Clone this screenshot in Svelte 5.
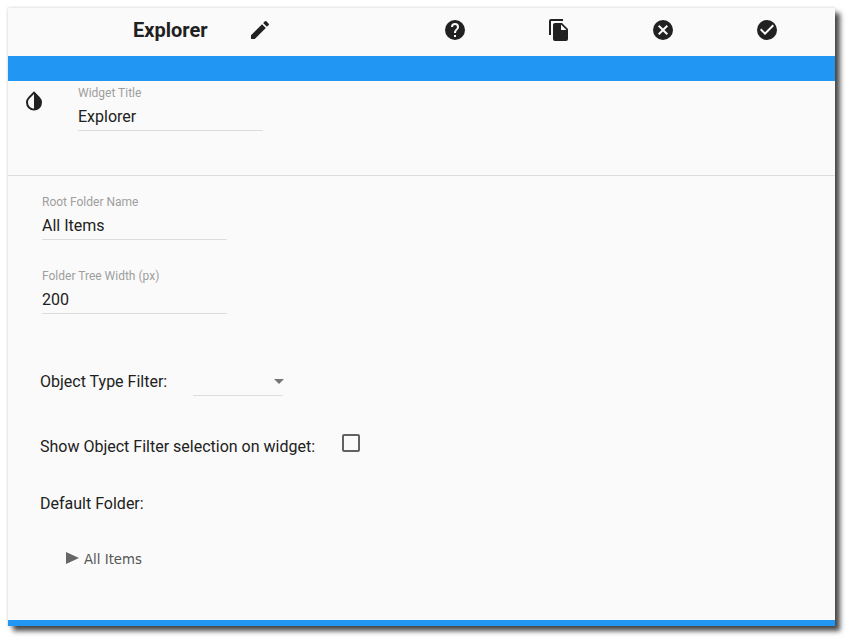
<script>
  let title = "Explorer";
  let rootName = "All Items";
  let treeWidth = "200";
  let showFilter = false;
</script>

<div class="panel">
  <header class="toolbar">
    <h1 class="title">{title}</h1>
    <button class="tool" type="button" aria-label="Edit">
      <svg viewBox="0 0 24 24"><path d="M3 17.25V21h3.75L17.81 9.94l-3.75-3.75L3 17.25zM20.71 7.04a1 1 0 0 0 0-1.41l-2.34-2.34a1 1 0 0 0-1.41 0l-1.83 1.83 3.75 3.75 1.83-1.83z" /></svg>
    </button>
    <div class="actions">
      <button class="tool" type="button" aria-label="Help">
        <svg viewBox="0 0 24 24"><path d="M12 2a10 10 0 1 0 0 20 10 10 0 0 0 0-20zm1 17h-2v-2h2v2zm2.07-7.75-.9.92C13.45 12.9 13 13.5 13 15h-2v-.5c0-1.1.45-2.1 1.17-2.83l1.24-1.26c.37-.36.59-.86.59-1.41a2 2 0 0 0-4 0H8a4 4 0 0 1 8 0c0 .88-.36 1.68-.93 2.25z" /></svg>
      </button>
      <button class="tool" type="button" aria-label="Copy">
        <svg viewBox="0 0 24 24"><path d="M16 1H4a2 2 0 0 0-2 2v14h2V3h12V1zm-1 4 6 6v10a2 2 0 0 1-2 2H8a2 2 0 0 1-2-2l.01-14c0-1.1.89-2 1.99-2h7zm-1 7h5.5L14 6.5V12z" /></svg>
      </button>
      <button class="tool" type="button" aria-label="Cancel">
        <svg viewBox="0 0 24 24"><path d="M12 2a10 10 0 1 0 0 20 10 10 0 0 0 0-20zm5 13.59L15.59 17 12 13.41 8.41 17 7 15.59 10.59 12 7 8.41 8.41 7 12 10.59 15.59 7 17 8.41 13.41 12 17 15.59z" /></svg>
      </button>
      <button class="tool" type="button" aria-label="Save">
        <svg viewBox="0 0 24 24"><path d="M12 2a10 10 0 1 0 0 20 10 10 0 0 0 0-20zm-2 15-5-5 1.41-1.41L10 14.17l7.59-7.59L19 8l-9 9z" /></svg>
      </button>
    </div>
  </header>

  <div class="band"></div>

  <section class="title-row">
    <svg class="tint" viewBox="0 0 24 24"><path d="M17.66 7.93 12 2.27 6.34 7.93a8 8 0 1 0 11.32 0zM12 19.59c-1.6 0-3.11-.62-4.24-1.76A5.95 5.95 0 0 1 6 13.59c0-1.6.62-3.11 1.76-4.24L12 5.1v14.49z" /></svg>
    <label class="field">
      <span>Widget Title</span>
      <input type="text" bind:value={title} />
    </label>
  </section>

  <section class="body">
    <label class="field">
      <span>Root Folder Name</span>
      <input type="text" bind:value={rootName} />
    </label>
    <label class="field second">
      <span>Folder Tree Width (px)</span>
      <input type="text" bind:value={treeWidth} />
    </label>

    <div class="filter-row">
      <span class="text">Object Type Filter:</span>
      <div class="select"><i class="arrow"></i></div>
    </div>

    <div class="check-row">
      <span class="text">Show Object Filter selection on widget:</span>
      <input class="box" type="checkbox" bind:checked={showFilter} />
    </div>

    <div class="text default">Default Folder:</div>

    <div class="tree-node">
      <i class="caret"></i>
      <span>All Items</span>
    </div>
  </section>

  <div class="footer"></div>
</div>

<style>
  :global(body) {
    min-height: 642px;
    background: #fff;
    font-family: Roboto, "Liberation Sans", sans-serif;
  }

  .panel {
    box-sizing: border-box;
    width: 827px;
    height: 618px;
    margin: 8px 0 0 8px;
    display: flex;
    flex-direction: column;
    background: #fafafa;
    color: #212121;
    box-shadow: 5px 5px 5px rgba(0, 0, 0, 0.7), 0 0 3px rgba(0, 0, 0, 0.2);
  }

  .toolbar {
    box-sizing: border-box;
    height: 48px;
    display: flex;
    align-items: center;
    padding: 0 0 4px 125px;
  }

  .title {
    width: 75px;
    margin: 0;
    font-size: 20px;
    font-weight: 700;
    white-space: nowrap;
  }

  .tool {
    width: 104px;
    height: 44px;
    padding: 0;
    border: 0;
    background: none;
    display: grid;
    place-items: center;
  }

  .tool svg {
    width: 24px;
    height: 24px;
    fill: #212121;
  }

  .actions {
    display: flex;
    margin-left: 91px;
  }

  .band {
    height: 25px;
    background: #2196f3;
  }

  .title-row {
    height: 94px;
    display: flex;
    align-items: flex-start;
    padding-left: 14px;
    border-bottom: 1px solid #ddd;
  }

  .tint {
    width: 24px;
    height: 24px;
    margin-top: 8px;
    margin-right: 32px;
    fill: #212121;
  }

  .field {
    display: flex;
    flex-direction: column;
    width: 185px;
    border-bottom: 1px solid #ddd;
  }

  .title-row .field {
    margin-top: 5px;
  }

  .field span {
    font-size: 12px;
    line-height: 14px;
    color: #9e9e9e;
  }

  .field input {
    box-sizing: border-box;
    height: 30px;
    padding: 3px 0 0;
    border: 0;
    outline: none;
    background: none;
    font: 16px Roboto, sans-serif;
    color: #212121;
  }

  .body {
    flex: 1;
    padding: 19px 0 0 34px;
  }

  .second {
    margin-top: 29px;
  }

  .text {
    font-size: 16px;
    line-height: 20px;
    color: #212121;
  }

  .filter-row {
    display: flex;
    margin: 58px 0 0 -2px;
    height: 25px;
    align-items: flex-start;
  }

  .select {
    width: 90px;
    height: 24px;
    margin-left: 26px;
    box-sizing: border-box;
    border-bottom: 1px solid #ddd;
    position: relative;
  }

  .arrow {
    position: absolute;
    right: -1px;
    top: 7px;
    border-left: 5px solid transparent;
    border-right: 5px solid transparent;
    border-top: 5px solid #757575;
  }

  .check-row {
    display: flex;
    align-items: flex-start;
    margin: 40px 0 0 -2px;
  }

  .box {
    appearance: none;
    width: 18px;
    height: 18px;
    margin: -3px 0 0 27px;
    border: 2px solid #616161;
    border-radius: 2px;
    box-sizing: border-box;
    background: none;
  }

  .default {
    margin: 37px 0 0 -2px;
  }

  .tree-node {
    display: flex;
    align-items: center;
    margin: 38px 0 0 24px;
    font: 13.3px "DejaVu Sans", Verdana, sans-serif;
    color: #555;
  }

  .caret {
    border-left: 13px solid #666;
    border-top: 6px solid transparent;
    border-bottom: 6px solid transparent;
    margin: -4px 5px 0 0;
  }

  .footer {
    height: 6px;
    background: #2196f3;
  }
</style>
